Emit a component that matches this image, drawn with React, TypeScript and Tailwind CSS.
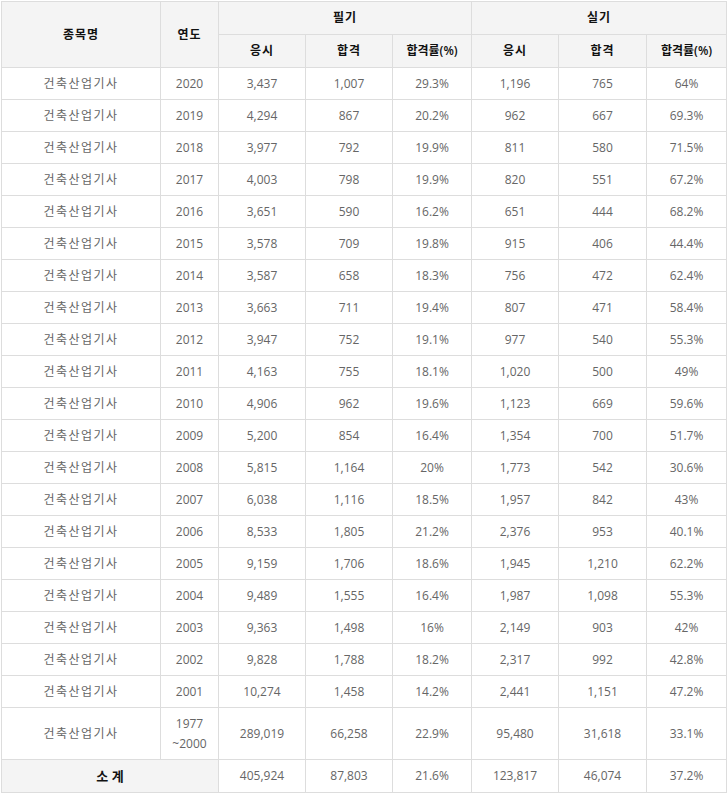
const rows: [string, string, string, string, string, string, string][] = [
  ['2020', '3,437', '1,007', '29.3%', '1,196', '765', '64%'],
  ['2019', '4,294', '867', '20.2%', '962', '667', '69.3%'],
  ['2018', '3,977', '792', '19.9%', '811', '580', '71.5%'],
  ['2017', '4,003', '798', '19.9%', '820', '551', '67.2%'],
  ['2016', '3,651', '590', '16.2%', '651', '444', '68.2%'],
  ['2015', '3,578', '709', '19.8%', '915', '406', '44.4%'],
  ['2014', '3,587', '658', '18.3%', '756', '472', '62.4%'],
  ['2013', '3,663', '711', '19.4%', '807', '471', '58.4%'],
  ['2012', '3,947', '752', '19.1%', '977', '540', '55.3%'],
  ['2011', '4,163', '755', '18.1%', '1,020', '500', '49%'],
  ['2010', '4,906', '962', '19.6%', '1,123', '669', '59.6%'],
  ['2009', '5,200', '854', '16.4%', '1,354', '700', '51.7%'],
  ['2008', '5,815', '1,164', '20%', '1,773', '542', '30.6%'],
  ['2007', '6,038', '1,116', '18.5%', '1,957', '842', '43%'],
  ['2006', '8,533', '1,805', '21.2%', '2,376', '953', '40.1%'],
  ['2005', '9,159', '1,706', '18.6%', '1,945', '1,210', '62.2%'],
  ['2004', '9,489', '1,555', '16.4%', '1,987', '1,098', '55.3%'],
  ['2003', '9,363', '1,498', '16%', '2,149', '903', '42%'],
  ['2002', '9,828', '1,788', '18.2%', '2,317', '992', '42.8%'],
  ['2001', '10,274', '1,458', '14.2%', '2,441', '1,151', '47.2%'],
]

const th = 'border border-[#dddddd] bg-[#f4f4f4] text-[#111] font-semibold text-center p-0'
const td = 'border border-[#dddddd] text-[#666] text-center p-0'
const name = `${td} tracking-[1.5px]`

export default function App() {
  return (
    <div className="bg-white p-px" style={{ fontFamily: "'Open Sans', 'Noto Sans CJK KR', sans-serif" }}>
      <table className="w-[725px] table-fixed border-collapse text-[12px] leading-[16px]">
        <colgroup>
          <col className="w-[159px]" />
          <col className="w-[58px]" />
          <col className="w-[87px]" />
          <col className="w-[87px]" />
          <col className="w-[79px]" />
          <col className="w-[87px]" />
          <col className="w-[88px]" />
          <col className="w-[80px]" />
        </colgroup>
        <thead>
          <tr className="h-[33px]">
            <th rowSpan={2} className={`${th} tracking-[1px]`}>종목명</th>
            <th rowSpan={2} className={`${th} tracking-[1px]`}>연도</th>
            <th colSpan={3} className={`${th} tracking-[1px]`}>필기</th>
            <th colSpan={3} className={`${th} tracking-[1px]`}>실기</th>
          </tr>
          <tr className="h-[33px]">
            <th className={`${th} tracking-[1px]`}>응시</th>
            <th className={`${th} tracking-[1px]`}>합격</th>
            <th className={th}>합격률(%)</th>
            <th className={`${th} tracking-[1px]`}>응시</th>
            <th className={`${th} tracking-[1px]`}>합격</th>
            <th className={th}>합격률(%)</th>
          </tr>
        </thead>
        <tbody>
          {rows.map((r) => (
            <tr key={r[0]} className="h-[32px]">
              <td className={name}>건축산업기사</td>
              {r.map((v, i) => (
                <td key={i} className={td}>{v}</td>
              ))}
            </tr>
          ))}
          <tr className="h-[52px]">
            <td className={name}>건축산업기사</td>
            <td className={`${td} leading-[20px]`}>1977<br />~2000</td>
            <td className={td}>289,019</td>
            <td className={td}>66,258</td>
            <td className={td}>22.9%</td>
            <td className={td}>95,480</td>
            <td className={td}>31,618</td>
            <td className={td}>33.1%</td>
          </tr>
          <tr className="h-[33px]">
            <td colSpan={2} className="border border-[#dddddd] bg-[#f4f4f4] text-[#111] font-bold text-center text-[13px] p-0">소 계</td>
            <td className={td}>405,924</td>
            <td className={td}>87,803</td>
            <td className={td}>21.6%</td>
            <td className={td}>123,817</td>
            <td className={td}>46,074</td>
            <td className={td}>37.2%</td>
          </tr>
        </tbody>
      </table>
    </div>
  )
}
